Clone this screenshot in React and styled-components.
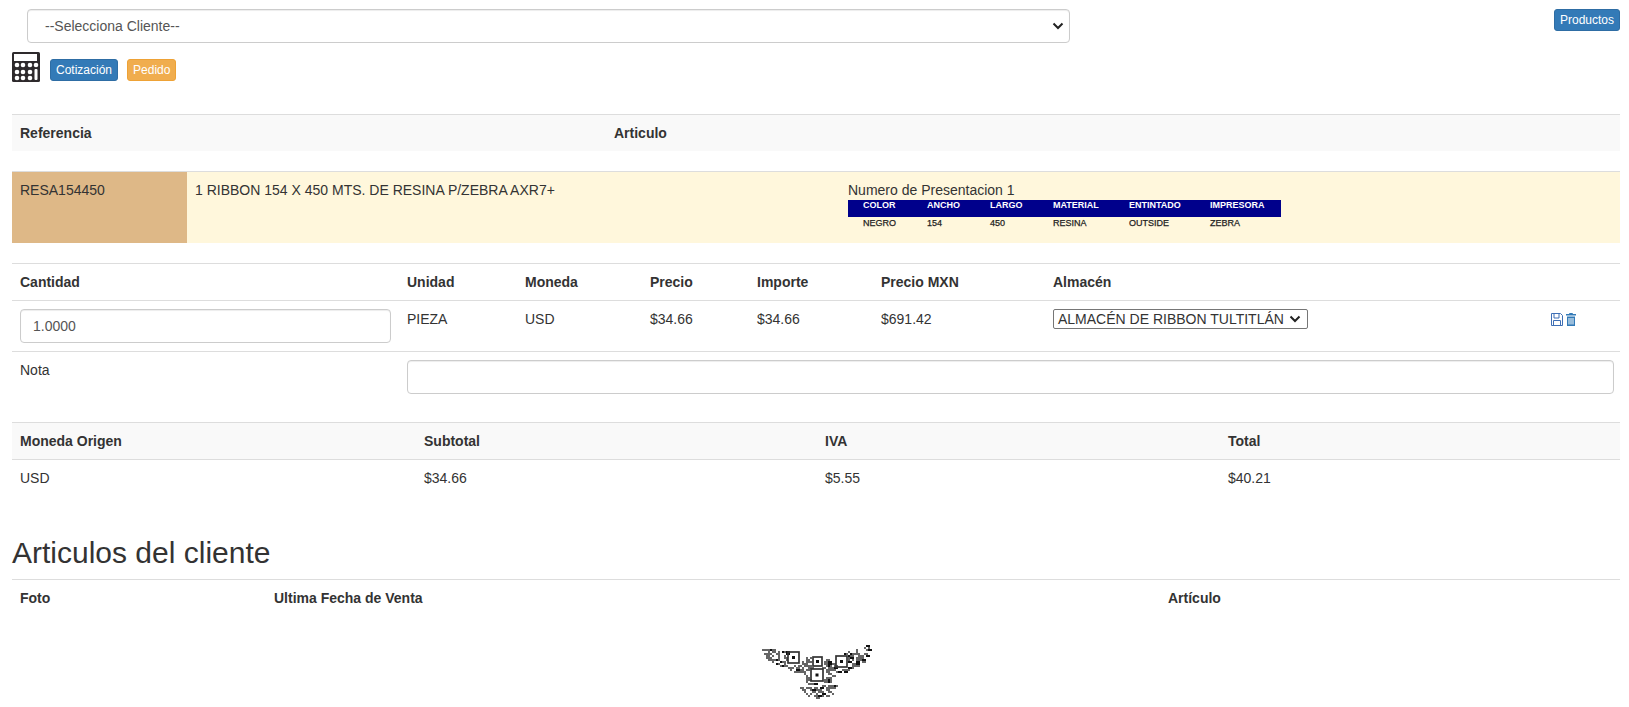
import styled, { createGlobalStyle } from "styled-components";

const GlobalStyle = createGlobalStyle`
  * { box-sizing: border-box; }
  body {
    margin: 0;
    background: #fff;
    color: #333;
    font-family: "Liberation Sans", Arial, sans-serif;
    font-size: 14px;
    line-height: 20px;
  }
`;

const PRODUCT_COLS = [
  { label: "COLOR", value: "NEGRO", width: 64 },
  { label: "ANCHO", value: "154", width: 63 },
  { label: "LARGO", value: "450", width: 63 },
  { label: "MATERIAL", value: "RESINA", width: 76 },
  { label: "ENTINTADO", value: "OUTSIDE", width: 81 },
  { label: "IMPRESORA", value: "ZEBRA", width: 86 },
];

// Siluetas del pajaro: alas, cuerpo y cola
const BIRD_SHAPES = [
  [[2, 6], [26, 8], [50, 22], [52, 38], [30, 27], [8, 18]],
  [[110, 2], [86, 10], [68, 24], [64, 38], [84, 30], [108, 18]],
  [[46, 14], [70, 14], [72, 40], [46, 42]],
  [[40, 44], [78, 42], [74, 52], [58, 57], [42, 51]],
];

const BIRD_FINDERS = [
  { x: 28, y: 9, size: 11 },
  { x: 53, y: 14, size: 9 },
  { x: 76, y: 13, size: 11 },
  { x: 51, y: 26, size: 12 },
];

const insideShape = (x, y, shape) => {
  let inside = false;
  for (let i = 0, j = shape.length - 1; i < shape.length; j = i++) {
    const [xi, yi] = shape[i];
    const [xj, yj] = shape[j];
    if (yi > y !== yj > y && x < ((xj - xi) * (y - yi)) / (yj - yi) + xi) inside = !inside;
  }
  return inside;
};

const insideFinder = (x, y) =>
  BIRD_FINDERS.some((f) => x > f.x - 2 && x < f.x + f.size + 1 && y > f.y - 2 && y < f.y + f.size + 1);

// Modulos del codigo, con una secuencia fija para que siempre salgan iguales
const buildModules = () => {
  const modules = [];
  let seed = 17;
  for (let y = 2; y < 58; y += 2) {
    for (let x = 0; x < 112; x += 2) {
      seed = (seed * 137 + 59) % 1009;
      const inShape = BIRD_SHAPES.some((s) => insideShape(x + 1, y + 1, s));
      if (inShape && !insideFinder(x, y) && seed % 100 < 50) {
        modules.push({ x, y, w: seed % 3 === 0 ? 4 : 2, dark: seed % 6 === 0 });
      }
    }
  }
  return modules;
};

const BIRD_MODULES = buildModules();

const CalculatorIcon = () => (
  <svg width="28" height="31" viewBox="0 0 28 31" aria-hidden="true">
    <rect x="0" y="1" width="28" height="30" rx="1.500" fill="#2e2a2c" />
    <rect x="2" y="3" width="23" height="7" fill="#fff" />
    {[14, 21, 27].flatMap((cy) =>
      [5, 11, 18].map((cx) => <circle key={`${cx}-${cy}`} cx={cx} cy={cy} r="2.300" fill="#fff" />)
    )}
    <circle cx="24" cy="14" r="2.300" fill="#fff" />
    <rect x="22.500" y="18" width="3" height="11" rx="1" fill="#fff" />
  </svg>
);

const SaveIcon = () => (
  <svg width="12" height="13" viewBox="0 0 12 13" aria-hidden="true">
    <path d="M.5.5h9l2 2v10H.5z" fill="none" stroke="#3f6fb5" />
    <path d="M3 1v4h5V1M2.500 12V7.500h7V12" fill="none" stroke="#3f6fb5" />
  </svg>
);

const TrashIcon = () => (
  <svg width="10" height="13" viewBox="0 0 10 13" aria-hidden="true">
    <path
      d="M3.500 0h3l.5 1h3v1.500H0V1h3zM1 3.500h8V13H1zM2.500 5v6.500h1V5zm2 0v6.500h1V5zm2 0v6.500h1V5z"
      fill="#337ab7"
      fillRule="evenodd"
    />
  </svg>
);

const SelectArrow = () => (
  <svg width="12" height="8" viewBox="0 0 12 8" aria-hidden="true">
    <path d="M1.500 1.500 6 6l4.500-4.500" fill="none" stroke="#222" strokeWidth="2" />
  </svg>
);

const BirdLogo = () => (
  <LogoSvg viewBox="0 0 112 60" width="112" height="60" aria-label="logo">
    {BIRD_MODULES.map((m, i) => (
      <rect key={i} x={m.x} y={m.y} width={m.w} height="2" fill={m.dark ? "#111" : "#666"} />
    ))}
    {BIRD_FINDERS.map(({ x, y, size }) => (
      <g key={`${x}-${y}`}>
        <rect x={x} y={y} width={size} height={size} fill="none" stroke="#333" strokeWidth="1.700" />
        <rect x={x + size / 2 - 1.5} y={y + size / 2 - 1.5} width="3" height="3" fill="#111" />
      </g>
    ))}
  </LogoSvg>
);

const App = () => (
  <Page>
    <GlobalStyle />
    <TopBar>
      <ClientSelect>
        <span>--Selecciona Cliente--</span>
        <SelectArrow />
      </ClientSelect>
      <Button $color="blue">Productos</Button>
    </TopBar>

    <Actions>
      <CalculatorIcon />
      <Button $color="blue">Cotización</Button>
      <Button $color="orange">Pedido</Button>
    </Actions>

    <Table $mt={33}>
      <colgroup>
        <Col $w={594} />
        <col />
      </colgroup>
      <thead>
        <HeadRow $shaded>
          <Th $noLine>Referencia</Th>
          <Th $noLine>Articulo</Th>
        </HeadRow>
      </thead>
    </Table>

    <ProductTable>
      <colgroup>
        <Col $w={175} />
        <Col $w={653} />
        <col />
      </colgroup>
      <tbody>
        <tr>
          <RefCell>RESA154450</RefCell>
          <ProductCell>1 RIBBON 154 X 450 MTS. DE RESINA P/ZEBRA AXR7+</ProductCell>
          <ProductCell>
            Numero de Presentacion 1
            <SpecTable>
              <thead>
                <tr>
                  {PRODUCT_COLS.map((c) => (
                    <SpecHead key={c.label} $w={c.width}>{c.label}</SpecHead>
                  ))}
                </tr>
              </thead>
              <tbody>
                <tr>
                  {PRODUCT_COLS.map((c) => (
                    <SpecCell key={c.label}>{c.value}</SpecCell>
                  ))}
                </tr>
              </tbody>
            </SpecTable>
          </ProductCell>
        </tr>
      </tbody>
    </ProductTable>

    <Table $mt={20}>
      <colgroup>
        <Col $w={387} />
        <Col $w={118} />
        <Col $w={125} />
        <Col $w={107} />
        <Col $w={124} />
        <Col $w={172} />
        <Col $w={497} />
        <col />
      </colgroup>
      <thead>
        <HeadRow>
          <Th>Cantidad</Th>
          <Th>Unidad</Th>
          <Th>Moneda</Th>
          <Th>Precio</Th>
          <Th>Importe</Th>
          <Th>Precio MXN</Th>
          <Th>Almacén</Th>
          <Th />
        </HeadRow>
      </thead>
      <tbody>
        <tr>
          <Td>
            <TextInput defaultValue="1.0000" />
          </Td>
          <Td>PIEZA</Td>
          <Td>USD</Td>
          <Td>$34.66</Td>
          <Td>$34.66</Td>
          <Td>$691.42</Td>
          <Td>
            <WarehouseSelect>
              <span>ALMACÉN DE RIBBON TULTITLÁN</span>
              <SelectArrow />
            </WarehouseSelect>
          </Td>
          <Td>
            <RowIcons>
              <SaveIcon />
              <TrashIcon />
            </RowIcons>
          </Td>
        </tr>
        <tr>
          <Td>Nota</Td>
          <NoteCell colSpan={7}>
            <TextInput />
          </NoteCell>
        </tr>
      </tbody>
    </Table>

    <Table $mt={20}>
      <colgroup>
        <Col $w={404} />
        <Col $w={401} />
        <Col $w={403} />
        <col />
      </colgroup>
      <thead>
        <HeadRow $shaded>
          <Th>Moneda Origen</Th>
          <Th>Subtotal</Th>
          <Th>IVA</Th>
          <Th>Total</Th>
        </HeadRow>
      </thead>
      <tbody>
        <tr>
          <Td>USD</Td>
          <Td>$34.66</Td>
          <Td>$5.55</Td>
          <Td>$40.21</Td>
        </tr>
      </tbody>
    </Table>

    <Heading>Articulos del cliente</Heading>

    <Table>
      <colgroup>
        <Col $w={254} />
        <Col $w={894} />
        <col />
      </colgroup>
      <thead>
        <HeadRow>
          <Th $noLine>Foto</Th>
          <Th $noLine>Ultima Fecha de Venta</Th>
          <Th $noLine>Artículo</Th>
        </HeadRow>
      </thead>
    </Table>

    <LogoRow>
      <BirdLogo />
    </LogoRow>
  </Page>
);

export default App;

const Page = styled.div`
  height: 707px;
  overflow: hidden;
  padding: 9px 9px 0 12px;
`;

const TopBar = styled.div`
  display: flex;
  justify-content: space-between;
  align-items: flex-start;
  padding-left: 15px;
`;

const fieldBorder = `
  border: 1px solid #ccc;
  border-radius: 4px;
  box-shadow: inset 0 1px 1px rgba(0, 0, 0, 0.075);
`;

const ClientSelect = styled.div`
  ${fieldBorder}
  width: 1043px;
  height: 34px;
  padding: 0 5px 0 17px;
  display: flex;
  align-items: center;
  justify-content: space-between;
  color: #555;
`;

const Button = styled.span`
  display: inline-block;
  padding: 1px 5px;
  height: 22px;
  font-size: 12px;
  line-height: 18px;
  border-radius: 3px;
  color: #fff;
  border: 1px solid ${(p) => (p.$color === "orange" ? "#eea236" : "#2e6da4")};
  background: ${(p) => (p.$color === "orange" ? "#f0ad4e" : "#337ab7")};
`;

const Actions = styled.div`
  display: flex;
  align-items: flex-end;
  gap: 9px;
  margin-top: 8px;

  svg { margin: 0 1px -1px 0; }
`;

const Table = styled.table`
  width: 100%;
  table-layout: fixed;
  border-collapse: collapse;
  margin-top: ${(p) => p.$mt || 0}px;
`;

const Col = styled.col`
  width: ${(p) => p.$w}px;
`;

const HeadRow = styled.tr`
  background: ${(p) => (p.$shaded ? "#f9f9f9" : "transparent")};
`;

const Th = styled.th`
  padding: 8px;
  text-align: left;
  font-weight: 700;
  border-top: 1px solid #ddd;
  border-bottom: ${(p) => (p.$noLine ? "0" : "1px solid #ddd")};
`;

const Td = styled.td`
  padding: 8px;
  vertical-align: top;
  border-top: 1px solid #ddd;
`;

const NoteCell = styled(Td)`
  padding-right: 6px;
`;

const ProductTable = styled(Table)`
  margin-top: 20px;
  background: #fff7dc;
`;

const ProductCell = styled.td`
  height: 71px;
  padding: 8px;
  vertical-align: top;
  border-top: 1px solid #ddd;
  color: #333;
`;

const RefCell = styled(ProductCell)`
  background: #deb887;
`;

const SpecTable = styled.table`
  border-collapse: collapse;
  table-layout: fixed;
  width: 433px;
  font-size: 9px;
  line-height: 11px;
`;

const SpecHead = styled.th`
  width: ${(p) => p.$w}px;
  background: #00008b;
  color: #fff;
  text-align: left;
  font-weight: 700;
  padding: 0 0 6px 15px;
`;

const SpecCell = styled.td`
  padding: 1px 0 0 15px;
  color: #222;
  -webkit-text-stroke: 0.25px #222;
`;

const TextInput = styled.input`
  ${fieldBorder}
  display: block;
  width: 100%;
  height: 34px;
  padding: 6px 12px;
  font: inherit;
  color: #555;
  outline: none;
`;

const WarehouseSelect = styled.div`
  display: inline-flex;
  align-items: center;
  gap: 5px;
  width: 255px;
  height: 20px;
  padding: 0 4px;
  border: 1px solid #767676;
  border-radius: 2px;
  white-space: nowrap;
  color: #333;
`;

const RowIcons = styled.div`
  display: flex;
  gap: 3px;
  padding-top: 4px;
  padding-left: 1px;
`;

const Heading = styled.h2`
  margin: 40px 0 10px;
  font-size: 30px;
  line-height: 33px;
  font-weight: 500;
  color: #333;
`;

const LogoRow = styled.div`
  display: flex;
  justify-content: center;
  padding-top: 27px;
`;

const LogoSvg = styled.svg`
  filter: blur(0.6px);
`;
